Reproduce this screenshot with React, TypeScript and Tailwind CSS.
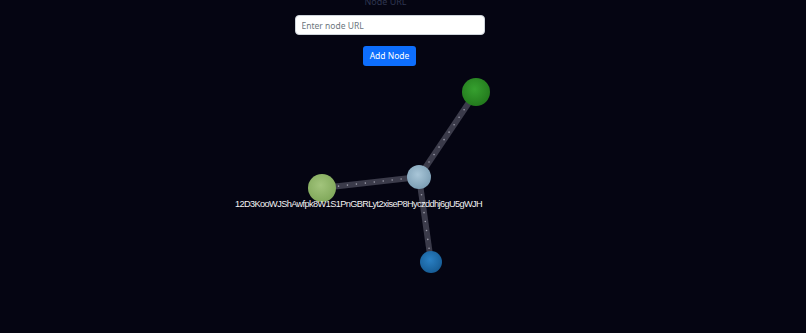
import React from 'react';

type GraphNode = { id: string; x: number; y: number; r: number; inner: string; outer: string };

const nodes: GraphNode[] = [
  { id: 'hub', x: 419, y: 177, r: 12, inner: '#a9c6d8', outer: '#7d9fb5' },
  { id: 'peer-a', x: 476, y: 92, r: 14, inner: '#36a02f', outer: '#237a1d' },
  { id: 'peer-b', x: 322, y: 188, r: 14, inner: '#a2c47c', outer: '#81a95b' },
  { id: 'peer-c', x: 431, y: 262, r: 11, inner: '#2a80c4', outer: '#175d96' },
];

const links = [
  ['hub', 'peer-a'],
  ['hub', 'peer-b'],
  ['hub', 'peer-c'],
];

function byId(id: string) {
  return nodes.find((n) => n.id === id)!;
}

function Graph() {
  return (
    <svg width={806} height={261} viewBox="0 72 806 261" className="block">
      <defs>
        {nodes.map((n) => (
          <radialGradient key={n.id} id={`g-${n.id}`} cx="45%" cy="40%" r="60%">
            <stop offset="0%" stopColor={n.inner} />
            <stop offset="100%" stopColor={n.outer} />
          </radialGradient>
        ))}
      </defs>

      {links.map(([a, b]) => {
        const s = byId(a);
        const t = byId(b);
        return (
          <g key={a + b}>
            <line x1={s.x} y1={s.y} x2={t.x} y2={t.y} stroke="#3b3b4a" strokeWidth={6} />
            <line
              x1={s.x}
              y1={s.y}
              x2={t.x}
              y2={t.y}
              stroke="#c9c9d6"
              strokeOpacity={0.7}
              strokeWidth={1.6}
              strokeLinecap="round"
              strokeDasharray="0 9"
            />
          </g>
        );
      })}

      {nodes.map((n) => (
        <circle key={n.id} cx={n.x} cy={n.y} r={n.r} fill={`url(#g-${n.id})`} />
      ))}

      <text
        x={235}
        y={206.5}
        fill="#f2f2f2"
        fontSize={9.2}
        letterSpacing={-0.6}
        fontFamily="'Liberation Sans', Arial, sans-serif"
      >
        12D3KooWJShAwfpk8W1S1PnGBRLyt2xiseP8Hyczddhj6gU5gWJH
      </text>
    </svg>
  );
}

export default function App() {
  return (
    <div className="h-[333px] w-[806px] overflow-hidden bg-[#050512] font-['Noto_Sans',sans-serif]">
      <div className="flex h-[72px] flex-col items-center pr-[27px]">
        <div className="mt-[-3px] h-[10px] pr-[8px] text-[9px] leading-[10px] text-[#2e3550]">Node URL</div>
        <input
          type="text"
          placeholder="Enter node URL"
          className="mt-[8px] h-[20px] w-[190px] rounded-[4px] border border-[#ced4da] bg-white px-[6px] text-[8.5px] text-gray-800 outline-none placeholder:text-[#6c757d]"
        />
        <button className="mt-[11px] h-[20px] w-[53px] rounded-[3px] bg-[#0d6efd] text-[8.5px] text-white">
          Add Node
        </button>
      </div>
      <Graph />
    </div>
  );
}
